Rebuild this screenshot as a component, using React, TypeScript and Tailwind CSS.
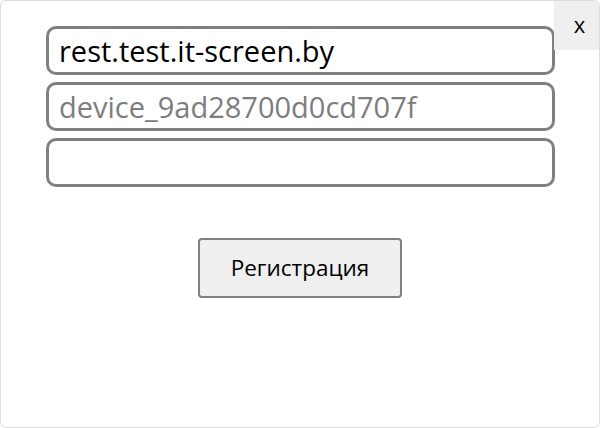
export default function App() {
  return (
    <div className="w-[600px] h-[428px] bg-white border border-[#dcdcdc] rounded-[6px] relative overflow-hidden font-['Open_Sans',sans-serif]">
      <button className="absolute top-0 right-0 w-[45px] h-[49px] bg-[#efefef] text-[22px] text-black flex items-center justify-center pb-[2px] pl-[6px]">
        x
      </button>
      <div className="pt-[25px] px-[45px] flex flex-col gap-[7px] w-[555px]">
        <input
          defaultValue="rest.test.it-screen.by"
          className="w-[509px] h-[49px] border-[3px] border-[#808080] rounded-[10px] px-[10px] text-[29px] text-black outline-none"
        />
        <input
          placeholder="device_9ad28700d0cd707f"
          className="w-[509px] h-[49px] border-[3px] border-[#808080] rounded-[10px] px-[10px] text-[29px] text-black placeholder:text-[#7d7d7d] outline-none"
        />
        <input
          type="password"
          className="w-[509px] h-[49px] border-[3px] border-[#808080] rounded-[10px] px-[10px] text-[29px] text-black outline-none"
        />
      </div>
      <div className="flex justify-center mt-[51px]">
        <button className="w-[204px] h-[60px] bg-[#efefef] border-2 border-[#808080] rounded-[4px] text-[22.5px] text-black">
          Регистрация
        </button>
      </div>
    </div>
  );
}
